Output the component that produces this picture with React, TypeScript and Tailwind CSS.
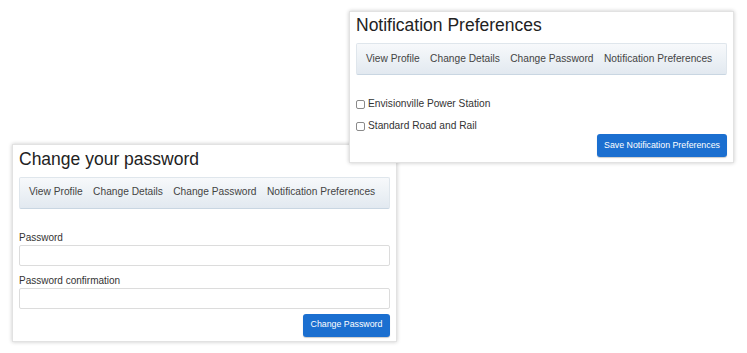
import React from "react";

const font = { fontFamily: '"Liberation Sans", Arial, sans-serif' };

function Nav() {
  const items = ["View Profile", "Change Details", "Change Password", "Notification Preferences"];
  return (
    <div className="flex h-[32px] items-center gap-[10.5px] rounded-[2px] border border-[#dfe6ec] border-b-[#c9d6e2] bg-gradient-to-b from-[#f7f9fb] to-[#e2e9f0] pl-[9px] text-[10.2px] leading-none text-[#444]">
      {items.map((t) => (
        <span key={t} className="whitespace-nowrap">
          {t}
        </span>
      ))}
    </div>
  );
}

function Box() {
  return <span className="inline-block h-[9px] w-[9px] rounded-[2px] border border-[#8a8a8a] bg-white" />;
}

export default function App() {
  return (
    <div className="relative h-[353px] w-[747px] overflow-hidden bg-white text-[#333]" style={font}>
      {/* Change password panel */}
      <div className="absolute left-[12px] top-[144px] flex h-[198px] w-[385px] flex-col border border-[#e2e2e2] bg-white px-[6px] pt-[4px] shadow-[0_0_4px_rgba(0,0,0,0.22)]">
        <div className="text-[17.5px] leading-[20px] text-[#222]">Change your password</div>
        <div className="mt-[7.5px]">
          <Nav />
        </div>
        <div className="mt-[23px] text-[10px] leading-[12px] text-[#333]">Password</div>
        <div className="mt-[1px] h-[21px] rounded-[2px] border border-[#dcdcdc] bg-white" />
        <div className="mt-[9px] text-[10px] leading-[12px] text-[#333]">Password confirmation</div>
        <div className="mt-[1px] h-[21px] rounded-[2px] border border-[#dcdcdc] bg-white" />
        <div className="mt-[5px] flex justify-end">
          <div className="flex h-[23px] w-[87px] items-center justify-center rounded-[3px] bg-[#1b6fd0] text-[8.8px] text-white shadow-[0_1px_1px_rgba(0,0,0,0.2)]">
            Change Password
          </div>
        </div>
      </div>

      {/* Notification preferences panel */}
      <div className="absolute left-[349px] top-[11px] flex h-[152px] w-[385px] flex-col border border-[#e2e2e2] bg-white px-[6px] pt-[3px] shadow-[0_0_4px_rgba(0,0,0,0.22)]">
        <div className="text-[17.5px] leading-[20px] text-[#222]">Notification Preferences</div>
        <div className="mt-[8px]">
          <Nav />
        </div>
        <div className="mt-[22px] flex h-[14px] items-center gap-[3px] text-[10.2px] leading-none">
          <Box />
          <span>Envisionville Power Station</span>
        </div>
        <div className="mt-[8px] flex h-[14px] items-center gap-[3px] text-[10.2px] leading-none">
          <Box />
          <span>Standard Road and Rail</span>
        </div>
        <div className="mt-[1px] flex justify-end">
          <div className="flex h-[23px] w-[130px] items-center justify-center rounded-[3px] bg-[#1b6fd0] text-[8.8px] text-white shadow-[0_1px_1px_rgba(0,0,0,0.2)]">
            Save Notification Preferences
          </div>
        </div>
      </div>
    </div>
  );
}
